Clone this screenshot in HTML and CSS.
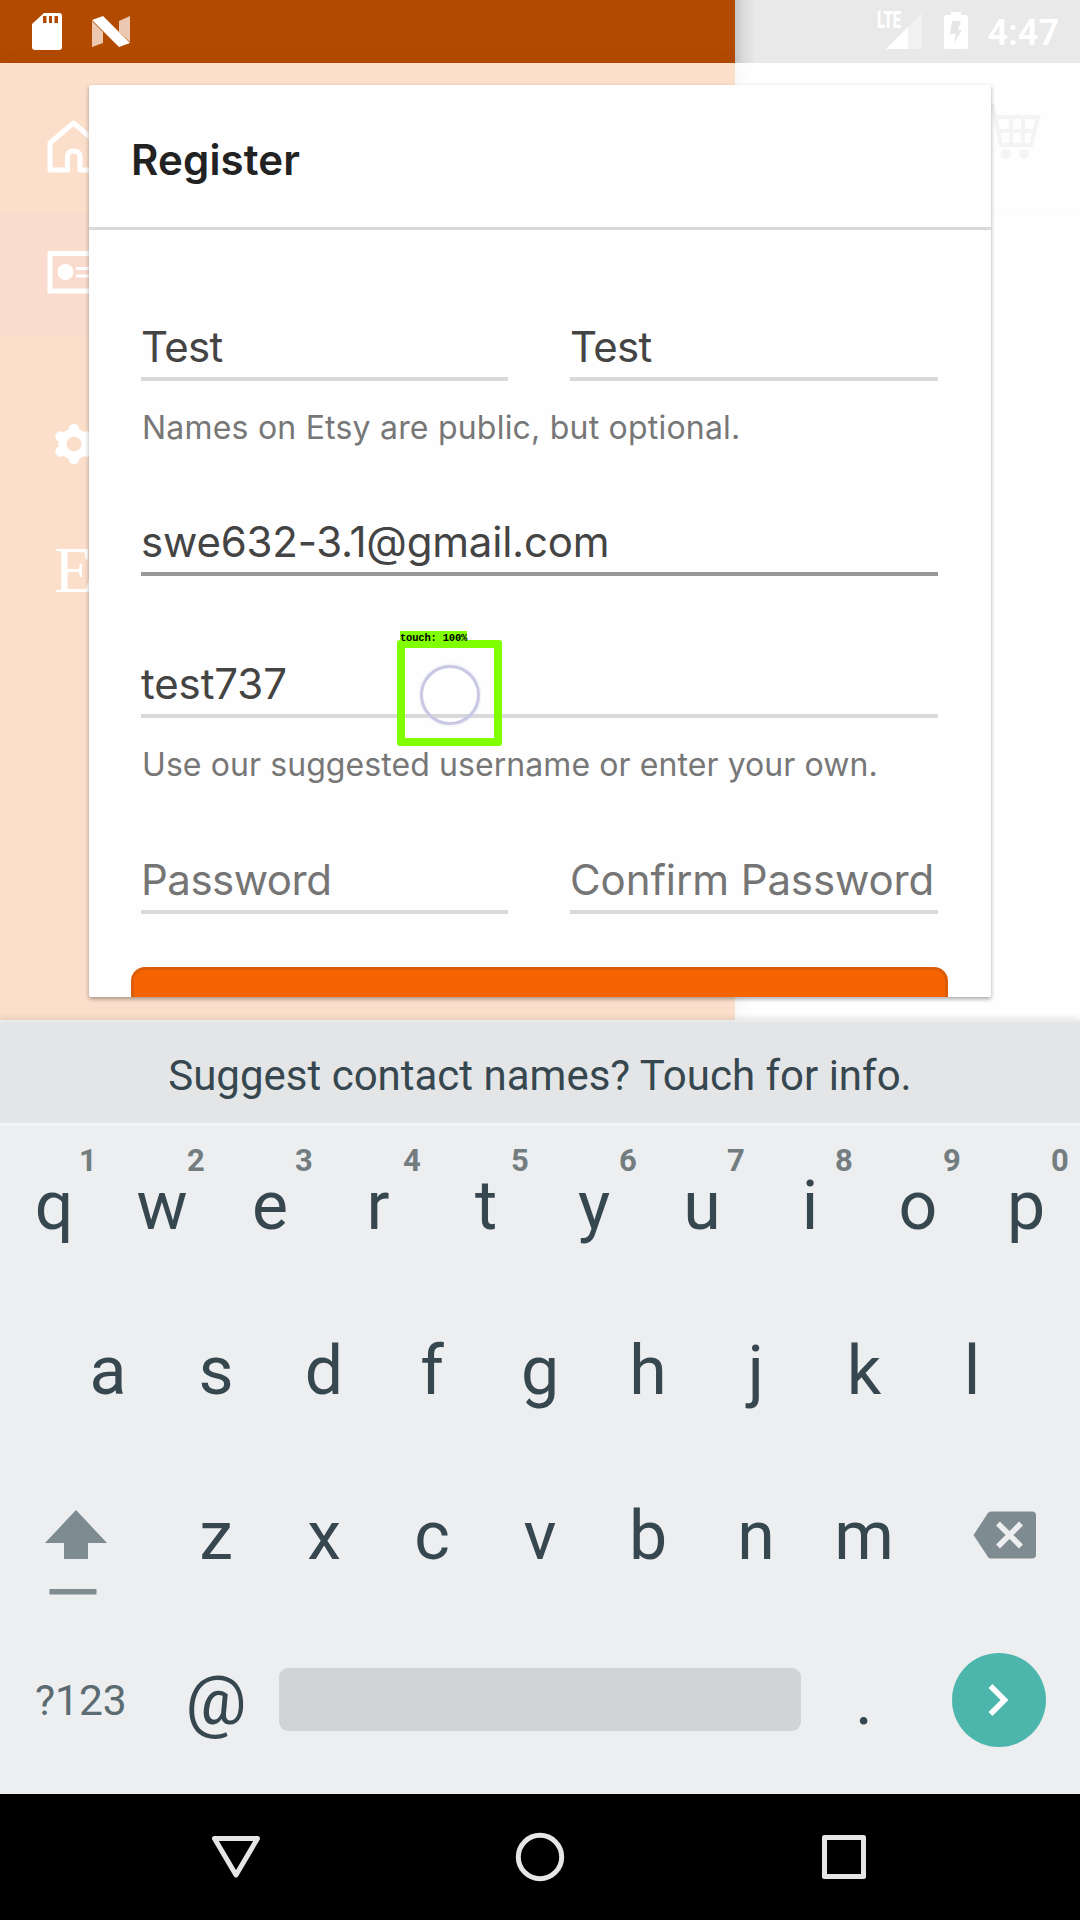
FILE: index.html
```html
<!DOCTYPE html>
<html lang="en">
<head>
<meta charset="utf-8">
<title>Register</title>
<link rel="stylesheet" href="styles.css">
</head>
<body>
<main class="app">
  <header class="status">
    <div class="status-left">
      <svg class="sd" width="32" height="40" viewBox="0 0 32 40"><path fill="#fff" fill-rule="evenodd" d="M13 1H28Q31 1 31 4V35Q31 38 28 38H4Q1 38 1 35V12ZM12 4V11H15.500V4ZM18 4V11H21V4ZM23.500 4V11H27V4Z"/></svg>
      <svg width="38" height="32" viewBox="0 0 38 32"><path fill="#ecc8b0" d="M0 5L11 16V27L0 31ZM27 5L38 0V26L27 16Z"/><path fill="#fff" d="M0 4L11 0L38 27L27 31Z"/></svg>
    </div>
    <div class="status-right">
      <div class="network"><span class="lte">LTE</span>
        <svg width="38" height="38" viewBox="0 0 38 38"><path fill="#f1f1f1" d="M37 1V37H1Z"/><path fill="#fff" d="M23 15V37H1Z"/></svg></div>
      <svg class="battery" width="24" height="38" viewBox="0 0 24 38"><path fill="#fff" d="M7 0H17V3H22Q24 3 24 5V35Q24 37 22 37H2Q0 37 0 35V5Q0 3 2 3H7Z"/><path fill="#e6e6e6" d="M8 9H17L14 18H18L10 31L12 22H6Z"/></svg>
      <span class="time">4:47</span>
    </div>
  </header>
  <div class="screen">
    <nav class="drawer">
      <div class="drawer-item home"><svg width="54" height="56" viewBox="0 0 54 56"><path fill="none" stroke="#fff" stroke-width="5" stroke-linejoin="round" d="M3 24L26.500 4L50 24V51H33V38Q33 32 26.500 32Q20.500 32 20.500 38V51H3Z"/></svg></div>
      <div class="drawer-item account"><svg width="54" height="43" viewBox="0 0 54 43"><rect x="3" y="2.500" width="49" height="37.500" fill="none" stroke="#fff" stroke-width="5"/><circle cx="18.500" cy="21" r="8" fill="#fff"/><path stroke="#fff" stroke-width="3" d="M29 17.500H44M29 25H44"/></svg></div>
      <div class="drawer-item settings"><svg width="42" height="42" viewBox="0 0 42 42"><circle cx="21" cy="21" r="11.500" fill="none" stroke="#fff" stroke-width="8"/><g stroke="#fff" stroke-width="10.500" stroke-linecap="round"><path d="M21 6V8M21 34V36M7.500 13.500L9.500 14.500M32.500 27.500L34.500 28.500M7.500 28.500L9.500 27.500M32.500 14.500L34.500 13.500"/></g></svg></div>
      <div class="drawer-item about">E</div>
    </nav>
    <div class="shop"><svg width="56" height="60" viewBox="0 0 56 60"><g fill="none" stroke="#f4f4f4" stroke-width="4"><path d="M0 4H8L16 43H46L53 15H11M13 29H49M26 15V43M38 15V43"/></g><circle cx="21" cy="52" r="5" fill="#f4f4f4"/><circle cx="39" cy="52" r="5" fill="#f4f4f4"/></svg></div>
  </div>
  <section class="dialog">
    <h1 class="dialog-title">Register</h1>
    <form class="form">
      <div class="pair"><div class="field name">Test</div><div class="field name">Test</div></div>
      <p class="hint names">Names on Etsy are public, but optional.</p>
      <div class="field focused email">swe632-3.1@gmail.com</div>
      <div class="field username">test737</div>
      <p class="hint own">Use our suggested username or enter your own.</p>
      <div class="pair passwords"><div class="field empty password">Password</div><div class="field empty confirm">Confirm Password</div></div>
      <div class="submit"></div>
    </form>
  </section>
  <div class="touch"><span class="touch-label">touch: 100%</span><span class="touch-ring"></span></div>
</main>
<section class="keyboard">
  <div class="suggestion">Suggest contact names? Touch for info.</div>
  <div class="row">
    <div class="key">q<sup>1</sup></div><div class="key">w<sup>2</sup></div><div class="key">e<sup>3</sup></div><div class="key">r<sup>4</sup></div><div class="key">t<sup>5</sup></div><div class="key">y<sup>6</sup></div><div class="key">u<sup>7</sup></div><div class="key">i<sup>8</sup></div><div class="key">o<sup>9</sup></div><div class="key">p<sup>0</sup></div>
  </div>
  <div class="row">
    <div class="key">a</div><div class="key">s</div><div class="key">d</div><div class="key">f</div><div class="key">g</div><div class="key">h</div><div class="key">j</div><div class="key">k</div><div class="key">l</div>
  </div>
  <div class="row">
    <div class="wide shift"><svg width="64" height="86" viewBox="0 0 64 86"><path fill="#7e8b90" d="M32 0L63 33H44V49H20V33H1ZM5.500 79H52.500V84.500H5.500Z"/></svg></div>
    <div class="key">z</div><div class="key">x</div><div class="key">c</div><div class="key">v</div><div class="key">b</div><div class="key">n</div><div class="key">m</div>
    <div class="wide backspace"><svg width="64" height="48" viewBox="0 0 64 48"><path fill="#7e8b90" d="M18 0.500H59Q63 0.500 63 4.500V43.500Q63 47.500 59 47.500H18Q16 47.500 15 46L0.500 24L15 2Q16 0.500 18 0.500Z"/><path stroke="#eceef0" stroke-width="5.500" d="M25 12.500L48 35.500M48 12.500L25 35.500"/></svg></div>
  </div>
  <div class="row">
    <div class="wide symbols">?123</div><div class="key at">@</div>
    <div class="space"></div><div class="key">.</div>
    <div class="wide next"><svg width="94" height="94" viewBox="0 0 94 94"><circle cx="47" cy="47" r="47" fill="#4db6ac"/><path fill="none" stroke="#fff" stroke-width="5.500" d="M38.500 33L52.500 47L38.500 61"/></svg></div>
  </div>
</section>
<footer class="navbar">
  <svg width="50" height="50" viewBox="0 0 50 50"><path d="M3.500 6.500H46.500L25 43Z"/></svg>
  <svg width="50" height="50" viewBox="0 0 50 50"><circle cx="25" cy="25" r="21.700"/></svg>
  <svg width="50" height="50" viewBox="0 0 50 50"><rect x="5.500" y="5.500" width="39" height="39"/></svg>
</footer>
</body>
</html>
```
FILE: styles.css
```css
* { box-sizing: border-box; }
body { margin: 0; width: 1080px; height: 1920px; display: flex; flex-direction: column; overflow: hidden; background: #fefefe; font-family: Inter, "Liberation Sans", sans-serif; }
svg { display: block; flex: none; }

.app { position: relative; height: 1020px; display: flex; flex-direction: column; }
.status { height: 63px; display: flex; justify-content: space-between; background: linear-gradient(90deg, #b24a00 735px, #c6c6c6 735px, #dadada 743px, #e9e9e9 756px); }
.status-left { display: flex; gap: 29px; padding: 12px 0 0 31px; }
.status-left svg + svg { margin-top: 4px; }
.status-right { display: flex; padding: 12px 21px 0 0; color: #fff; }
.network { position: relative; padding-left: 8px; margin-right: 21px; }
.lte { position: absolute; left: 0; top: -2px; font: 900 23px/22px Roboto, sans-serif; transform: scaleX(.64); transform-origin: left; }
.battery { margin-right: 19px; }
.time { font: 600 36px/42px Roboto, sans-serif; }

.screen { flex: 1; display: flex; justify-content: space-between; }
.drawer { width: 735px; background: #fbdfcb; box-shadow: 0 0 18px rgba(0, 0, 0, .06); }
.drawer-item { padding-left: 47px; }
.home { height: 150px; padding-top: 56px; }
.account { height: 123px; padding-top: 38px; background: #f9dccd; }
.settings { height: 150px; padding: 87px 0 0 53px; }
.about { padding-left: 54px; margin-top: 47px; color: #fff; font: 65px/74px "Liberation Serif", serif; }
.shop { width: 95px; height: 151px; padding: 39px 0 0 0; border-bottom: 1px solid #fbfbfb; }

.dialog { position: absolute; left: 89px; top: 85px; width: 902px; height: 912px; overflow: hidden; background: #fefefe; }
.dialog { box-shadow: 0 2px 4px rgba(0, 0, 0, .35); border-radius: 2px; }
.dialog-title { margin: 0; height: 145px; padding-left: 42px; border-bottom: 3px solid #d9d9d9; color: #222; font-size: 42px; line-height: 150px; font-weight: 600; letter-spacing: .15px; }
.form { padding: 86px 53px 0 52px; }
.pair { display: grid; grid-template-columns: 367px 368px; justify-content: space-between; }
.field { height: 65px; border-bottom: 4px solid #d9d9d9; color: #444; font-size: 42px; line-height: 61px; white-space: nowrap; }
.name { letter-spacing: -.7px; }
.password { letter-spacing: -.5px; }
.confirm { letter-spacing: -.1px; }
.focused { border-color: #999; }
.empty { color: #757575; }
.hint { height: 40px; margin: 26px 0 0; color: #777; font-size: 32px; line-height: 42px; white-space: nowrap; padding-left: 1px; }
.names { letter-spacing: .21px; }
.own { letter-spacing: .08px; }
.email { margin-top: 64px; line-height: 62px; letter-spacing: -.2px; }
.username { margin-top: 77px; letter-spacing: -.1px; }
.passwords { margin-top: 65px; }
.submit { margin: 53px -10px 0; height: 60px; border: 3px solid #dd5c08; border-radius: 14px; background: #f56400; }

.touch { position: absolute; left: 397px; top: 640px; width: 105px; height: 106px; border: 8px solid #80ff00; border-radius: 3px; }
.touch-label { position: absolute; left: -5px; top: -17px; width: 67px; height: 12px; background: #80ff00; color: #000; font: 700 10.500px/14px "Liberation Mono", monospace; white-space: nowrap; letter-spacing: -.2px; }
.touch-ring { position: absolute; left: 15px; top: 17px; width: 60px; height: 60px; border: 3px solid #c8c8e4; border-radius: 50%; box-shadow: 0 0 3px #dcdcf0; }

.keyboard { position: relative; height: 774px; background: #eceef0; font-family: Roboto, sans-serif; color: #37474f; box-shadow: 0 -2px 7px rgba(0, 0, 0, .1); }
.suggestion { height: 106px; background: #e3e5e7; border-top: 2px solid #e9ebec; border-bottom: 3px solid #f1f3f4; text-align: center; font-size: 42px; line-height: 107px; }
.row { height: 165px; display: flex; justify-content: center; }
.key { position: relative; width: 108px; text-align: center; font-size: 68px; line-height: 160px; }
sup { position: absolute; left: 68px; top: 17px; width: 40px; font-size: 31px; line-height: 36px; font-weight: 700; color: #737d80; }
.wide { width: 162px; }
.shift { padding: 54px 0 0 44px; }
.backspace { padding: 55px 0 0 55px; }
.symbols { padding-left: 35px; font-size: 42.500px; line-height: 160px; color: #5c6b71; }
.space { width: 522px; height: 63px; margin: 47px 9px 0; border-radius: 9px; background: #d0d4d7; }
.next { padding: 32px 0 0 34px; }

.navbar { height: 126px; background: #000; display: flex; justify-content: center; align-items: center; gap: 254px; }
.navbar svg { fill: none; stroke: #e6e6e6; stroke-width: 5; stroke-linejoin: round; }
```
